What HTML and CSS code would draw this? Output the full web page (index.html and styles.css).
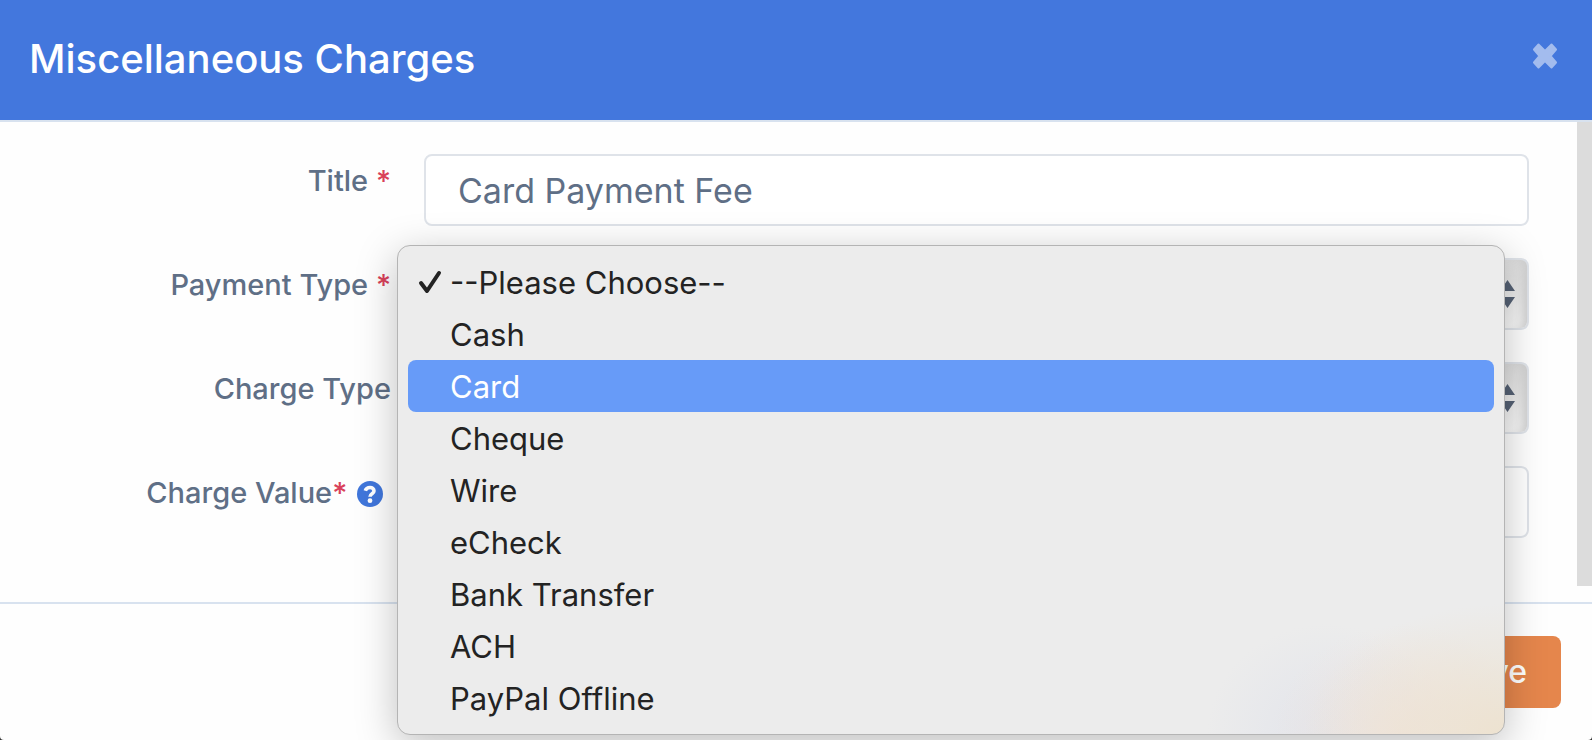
FILE: index.html
```html
<!DOCTYPE html>
<html lang="en">
<head>
    <meta charset="UTF-8">
    <meta name="viewport" content="width=device-width, initial-scale=1.0">
    <title>Miscellaneous Charges</title>
    <link rel="stylesheet" href="styles.css">
</head>
<body>

    <div class="modal">
        <header class="modal-header">
            <h1>Miscellaneous Charges</h1>
            <button type="button" class="close" aria-label="Close">
                <svg width="24" height="26" viewBox="0 0 24 26" fill="currentColor" stroke="currentColor" stroke-width="2" stroke-linejoin="round">
                    <path d="M5.5 1.5L12 8L18.5 1.5L23 6.5L17.5 13L23 19.5L18.5 24.5L12 18L5.5 24.5L1 19.5L6.5 13L1 6.5Z"/>
                </svg>
            </button>
        </header>

        <div class="modal-body">
            <form class="charge-form" id="chargeForm">
                <div class="form-row">
                    <label for="title">Title <span class="required">*</span></label>
                    <div class="field">
                        <input type="text" id="title" class="control" value="Card Payment Fee">
                    </div>
                </div>

                <div class="form-row">
                    <label for="paymentType">Payment Type <span class="required">*</span></label>
                    <div class="field">
                        <select id="paymentType" class="control select">
                            <option>--Please Choose--</option>
                            <option>Cash</option>
                            <option>Card</option>
                            <option>Cheque</option>
                            <option>Wire</option>
                            <option>eCheck</option>
                            <option>Bank Transfer</option>
                            <option>ACH</option>
                            <option>PayPal Offline</option>
                        </select>
                        <svg class="arrows" width="15" height="28" viewBox="0 0 15 28" fill="currentColor">
                            <path d="M7.5 0L15 11H0Z M0 17H15L7.5 28Z"/>
                        </svg>

                        <ul class="menu" role="listbox" aria-label="Payment Type">
                            <li role="option" aria-selected="true">
                                <svg class="check" width="24" height="24" viewBox="0 0 24 24" fill="none" stroke="currentColor" stroke-width="4" stroke-linecap="round" stroke-linejoin="round">
                                    <path d="M3 13L9 21L21 3"/>
                                </svg>
                                --Please Choose--
                            </li>
                            <li role="option">Cash</li>
                            <li role="option" class="active">Card</li>
                            <li role="option">Cheque</li>
                            <li role="option">Wire</li>
                            <li role="option">eCheck</li>
                            <li role="option">Bank Transfer</li>
                            <li role="option">ACH</li>
                            <li role="option">PayPal Offline</li>
                        </ul>
                    </div>
                </div>

                <div class="form-row">
                    <label for="chargeType">Charge Type</label>
                    <div class="field">
                        <select id="chargeType" class="control select">
                            <option></option>
                        </select>
                        <svg class="arrows" width="15" height="28" viewBox="0 0 15 28" fill="currentColor">
                            <path d="M7.5 0L15 11H0Z M0 17H15L7.5 28Z"/>
                        </svg>
                    </div>
                </div>

                <div class="form-row">
                    <label for="chargeValue">Charge Value<span class="required">*</span>
                        <svg class="help" width="26" height="26" viewBox="0 0 26 26">
                            <circle cx="13" cy="13" r="13" fill="#4076db"/>
                            <path d="M8.3 9.8C9.6 5.4 17 5.4 17 9.9C17 12.9 13 12.5 13 15.8" fill="none" stroke="#fff" stroke-width="3.6"/>
                            <circle cx="13" cy="19.7" r="2.4" fill="#fff"/>
                        </svg>
                    </label>
                    <div class="field">
                        <input type="text" id="chargeValue" class="control">
                    </div>
                </div>
            </form>
            <div class="scrollbar"></div>
        </div>

        <footer class="modal-footer">
            <button type="submit" form="chargeForm" class="save">Save</button>
        </footer>
    </div>

</body>
</html>
```
FILE: styles.css
```css
* {
    box-sizing: border-box;
}

body {
    margin: 0;
    background-color: #333;
    font-family: Inter, "Liberation Sans", sans-serif;
    color: #5f6f86;
}

.modal {
    display: flex;
    flex-direction: column;
    min-height: 100vh;
    background-color: #fefefe;
    border-radius: 0 0 4px 4px;
    overflow: hidden;
}

.modal-header {
    display: flex;
    align-items: center;
    justify-content: space-between;
    padding: 29px 35px 31px 29px;
    background-color: #4377dd;
    border-bottom: 2px solid #d8e2ef;
}

h1 {
    margin: 0;
    font-size: 40px;
    font-weight: 500;
    line-height: 60px;
    color: #fff;
}

.close {
    display: flex;
    padding: 0 0 6px;
    border: none;
    background: none;
    color: #a3bcee;
    cursor: pointer;
}

.modal-body {
    display: flex;
    flex: 1;
    padding-bottom: 16px;
}

.charge-form {
    display: flex;
    flex: 1;
    flex-direction: column;
    gap: 32px;
    padding: 32px 32px 32px 29px;
}

.form-row {
    display: grid;
    grid-template-columns: 1fr 3fr;
}

.form-row label {
    padding: 9px 17px 0 0;
    font-size: 29px;
    font-weight: 500;
    line-height: 36px;
    text-align: right;
    white-space: nowrap;
}

.required {
    color: #d9415a;
}

.help {
    margin: 0 8px 0 2px;
    vertical-align: -4px;
}

.field {
    position: relative;
    padding: 0 16px;
}

.control {
    display: block;
    width: 100%;
    height: 72px;
    padding: 0 32px;
    border: 2px solid #dfe3e9;
    border-radius: 8px;
    background-color: #fff;
    font-family: inherit;
    font-size: 34px;
    color: #5f6f86;
}

.select {
    appearance: none;
    background-image: linear-gradient(#dedede, #fafafa);
    box-shadow: inset -10px 0 8px -6px #cfcfcf;
}

.arrows {
    position: absolute;
    top: 22px;
    right: 30px;
    color: #566275;
}

.menu {
    position: absolute;
    z-index: 1;
    top: -13px;
    left: -11px;
    right: 40px;
    margin: 0;
    padding: 10px;
    list-style: none;
    border: 1px solid #b4b4b4;
    border-radius: 13px;
    background-color: #ececec;
    background-image:
        radial-gradient(ellipse 200px 130px at 100% 100%, #ede2d0, #ecead900),
        radial-gradient(ellipse 130px 110px at 91% 100%, #efe4dd, #efe4dd00),
        radial-gradient(ellipse 120px 110px at 84% 100%, #e2e4eb, #e2e4eb00);
    box-shadow: 0 10px 40px rgba(0, 0, 0, 0.25);
    color: #232323;
}

.menu li {
    position: relative;
    padding: 2px 0 0 42px;
    border-radius: 8px;
    font-size: 31px;
    line-height: 50px;
}

.menu .active {
    background-color: #679bf8;
    color: #fff;
}

.check {
    position: absolute;
    top: 14px;
    left: 10px;
}

.scrollbar {
    width: 15px;
    background-color: #dcdcdc;
}

.modal-footer {
    display: flex;
    justify-content: flex-end;
    padding: 32px 31px;
    border-top: 2px solid #d8e2ef;
}

.save {
    height: 72px;
    padding: 0 34px 2px;
    border: none;
    border-radius: 8px;
    background-color: #e5864c;
    font-family: inherit;
    font-size: 32px;
    font-weight: 500;
    color: #fff;
    cursor: pointer;
}
```
